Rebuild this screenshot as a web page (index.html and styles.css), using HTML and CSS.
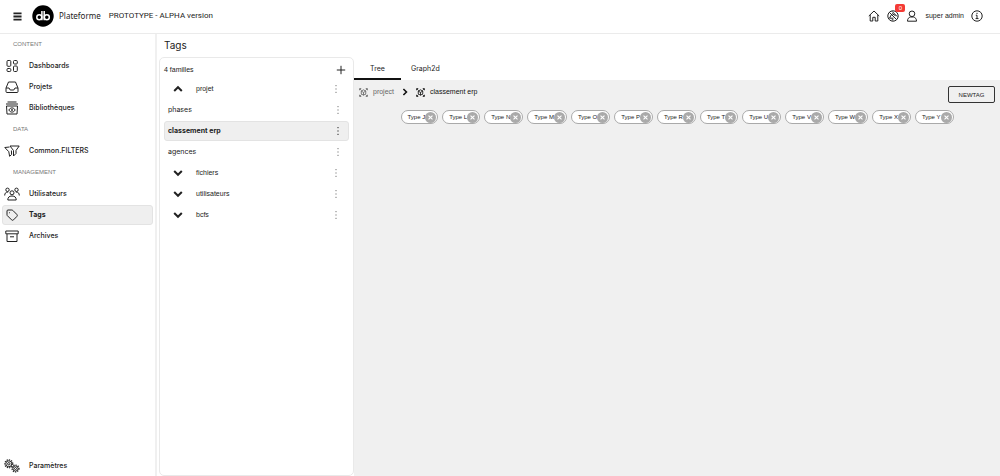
FILE: index.html
```html
<!DOCTYPE html>
<html lang="fr">
<head>
<meta charset="utf-8">
<title>Plateforme - Tags</title>
<link rel="stylesheet" href="styles.css">
</head>
<body>
<svg class="defs" aria-hidden="true">
  <symbol id="cube" viewBox="0 0 16 16"><path d="M1 4V1h3M12 1h3v3M15 12v3h-3M4 15H1v-3M8 3.200l4 2.300v5L8 12.800l-4-2.300v-5zM4 5.500l4 2.300 4-2.300M8 7.800v5M2 2l2.500 2.500M14 2l-2.500 2.500M2 14l2.500-2.500M14 14l-2.500-2.500"/></symbol>
  <symbol id="chevron" viewBox="0 0 10 10"><path d="M1.200 3l3.800 3.800L8.800 3"/></symbol>
  <symbol id="dots" viewBox="0 0 4 10"><path d="M2 1v1.200M2 4.400v1.200M2 7.800v1.200"/></symbol>
  <symbol id="cross" viewBox="0 0 10 10"><path d="M3.200 3.200l3.600 3.600M6.800 3.200l-3.600 3.600"/></symbol>
</svg>
<header class="topbar">
  <button class="icon-btn menu" aria-label="Menu"><svg viewBox="0 0 10 10"><path d="M.5 1.500h9M.5 5h9M.5 8.500h9"/></svg></button>
  <a class="brand" href="#"><svg class="logo" viewBox="0 0 22 22" role="img" aria-label="db"><circle cx="11" cy="11" r="10.700" fill="#000"/><g fill="none" stroke="#fff" stroke-width="1.500"><circle cx="7.300" cy="12.200" r="2.500"/><path d="M9.900 6v9.200M12.200 6v9.200"/><circle cx="14.800" cy="12.200" r="2.500"/></g></svg><span class="brand-name">Plateforme</span></a>
  <span class="version">PROTOTYPE - ALPHA version</span>
  <div class="tools">
    <button class="icon-btn" aria-label="Accueil"><svg viewBox="0 0 12 12"><path d="M.8 6L6 1l5.200 5M2.200 5v6h2.600V7.300h2.400V11h2.600V5"/></svg></button>
    <button class="icon-btn bell" aria-label="Notifications"><svg viewBox="0 0 12 12"><circle cx="6" cy="6" r="5.200"/><path d="M2.300 2.300l7.400 7.400M5.200 1.500l5 5M2.500 8.200L4.200 5M2.500 8.200h4M5 3.500l3.500 2.200M4.800 9.800h1.600"/></svg><span class="badge">0</span></button>
    <button class="icon-btn" aria-label="Compte"><svg viewBox="0 0 12 12"><circle cx="6" cy="3.800" r="2.800"/><path d="M1.500 11.200c0-2.600 1.200-3.700 3-4.200h3c1.800.5 3 1.600 3 4.200z"/></svg></button>
    <span class="user">super admin</span>
    <button class="icon-btn" aria-label="Informations"><svg viewBox="0 0 12 12"><circle cx="6" cy="6" r="5.200"/><path d="M4.800 5.200H6v3.300M4.600 8.600h2.900M6 2.800v1.200"/></svg></button>
  </div>
</header>
<div class="shell">
  <nav class="sidebar">
    <h2 class="nav-title">CONTENT</h2>
    <a class="nav-item" href="#"><svg viewBox="0 0 14 14"><rect x="2" y="1.500" width="3.800" height="5.800" rx="1"/><rect x="8.500" y="1.500" width="3.800" height="3.500" rx="1"/><rect x="2" y="9.500" width="3.800" height="3" rx="1"/><rect x="8.500" y="7" width="3.800" height="5.500" rx="1"/></svg>Dashboards</a>
    <a class="nav-item" href="#"><svg viewBox="0 0 14 14"><path d="M3.500 2h7L13 8v3.500a1 1 0 0 1-1 1H2a1 1 0 0 1-1-1V8zM1 8h3l1.200 2h3.600L10 8h3"/></svg>Projets</a>
    <a class="nav-item" href="#"><svg viewBox="0 0 14 14"><path d="M2.500 1h9M1 3h12M1.500 5h11l-.5 8H2zM3.800 9c1.600-2.800 4.800-2.800 6.400 0-1.600 2.800-4.800 2.800-6.400 0z"/><circle cx="7" cy="9" r=".6"/></svg>Bibliothèques</a>
    <h2 class="nav-title">DATA</h2>
    <a class="nav-item" href="#"><svg class="wide" viewBox="0 0 16 14"><path d="M6 2h9.200L12 6.500v3L9.500 12V6.500zM5.500 3L.8 3.500l4 4.200.8 4.600 2-1.800-.2-4"/></svg>Common.FILTERS</a>
    <h2 class="nav-title">MANAGEMENT</h2>
    <a class="nav-item" href="#"><svg class="wide" viewBox="0 0 16 14"><circle cx="3.500" cy="2.800" r="1.700"/><circle cx="12.500" cy="2.800" r="1.700"/><circle cx="8" cy="5.800" r="2"/><path d="M.7 8.500c0-2.400 1.200-3.500 3.500-3.500M15.300 8.500c0-2.400-1.200-3.500-3.500-3.500M3.800 13c0-2.600 1.300-4 4.200-4s4.200 1.400 4.200 4z"/></svg>Utilisateurs</a>
    <a class="nav-item selected" href="#"><svg viewBox="0 0 14 14"><path d="M3 2h3.800a1.500 1.500 0 0 1 1 .4l4 4a1.500 1.500 0 0 1 0 2.100L8.600 11.800a1.500 1.500 0 0 1-2.100 0l-4-4a1.500 1.500 0 0 1-.5-1V3a1 1 0 0 1 1-1z"/><path d="M4.500 4.400v.8"/></svg>Tags</a>
    <a class="nav-item" href="#"><svg viewBox="0 0 14 14"><path d="M.8 2h12.400v2.800H.8zM2 5v7.500h10V5M5 7.800h4"/></svg>Archives</a>
    <a class="nav-item settings" href="#"><svg class="wide" viewBox="0 0 16 14"><g stroke-width="1.200" stroke-dasharray="1.300 1"><circle cx="4.800" cy="4.800" r="4"/><circle cx="11.500" cy="9.500" r="3.500"/></g><circle cx="4.800" cy="4.800" r="3"/><circle cx="4.800" cy="4.800" r="1.200"/><circle cx="11.500" cy="9.500" r="2.600"/><circle cx="11.500" cy="9.500" r="1"/></svg>Paramètres</a>
  </nav>
  <div class="page">
    <h1 class="page-title">Tags</h1>
    <div class="content">
      <section class="families">
        <div class="families-head"><span>4 familles</span><button class="icon-btn" aria-label="Ajouter"><svg viewBox="0 0 10 10"><path d="M5 .8v8.400M.8 5h8.400"/></svg></button></div>
        <div class="family"><button class="toggle up" aria-label="Replier projet"><svg><use href="#chevron"/></svg></button><span>projet</span><button class="more" aria-label="Options projet"><svg><use href="#dots"/></svg></button></div>
        <ul class="children">
          <li class="child"><span>phases</span><button class="more" aria-label="Options phases"><svg><use href="#dots"/></svg></button></li>
          <li class="child selected"><span>classement erp</span><button class="more" aria-label="Options classement erp"><svg><use href="#dots"/></svg></button></li>
          <li class="child"><span>agences</span><button class="more" aria-label="Options agences"><svg><use href="#dots"/></svg></button></li>
        </ul>
        <div class="family"><button class="toggle" aria-label="Déplier fichiers"><svg><use href="#chevron"/></svg></button><span>fichiers</span><button class="more" aria-label="Options fichiers"><svg><use href="#dots"/></svg></button></div>
        <div class="family"><button class="toggle" aria-label="Déplier utilisateurs"><svg><use href="#chevron"/></svg></button><span>utilisateurs</span><button class="more" aria-label="Options utilisateurs"><svg><use href="#dots"/></svg></button></div>
        <div class="family"><button class="toggle" aria-label="Déplier bcfs"><svg><use href="#chevron"/></svg></button><span>bcfs</span><button class="more" aria-label="Options bcfs"><svg><use href="#dots"/></svg></button></div>
      </section>
      <main class="detail">
        <div class="tabs" role="tablist"><button class="tab active" role="tab" aria-selected="true">Tree</button><button class="tab" role="tab" aria-selected="false">Graph2d</button></div>
        <div class="canvas">
          <div class="crumb-row">
            <div class="crumbs"><a class="crumb" href="#"><svg><use href="#cube"/></svg>project</a><svg class="sep"><use href="#chevron"/></svg><a class="crumb current" href="#"><svg><use href="#cube"/></svg>classement erp</a></div>
            <button class="new-tag">NEWTAG</button>
          </div>
          <div class="chips">
            <span class="chip">Type J<button aria-label="Retirer Type J"><svg><use href="#cross"/></svg></button></span>
            <span class="chip">Type L<button aria-label="Retirer Type L"><svg><use href="#cross"/></svg></button></span>
            <span class="chip">Type N<button aria-label="Retirer Type N"><svg><use href="#cross"/></svg></button></span>
            <span class="chip">Type M<button aria-label="Retirer Type M"><svg><use href="#cross"/></svg></button></span>
            <span class="chip">Type O<button aria-label="Retirer Type O"><svg><use href="#cross"/></svg></button></span>
            <span class="chip">Type P<button aria-label="Retirer Type P"><svg><use href="#cross"/></svg></button></span>
            <span class="chip">Type R<button aria-label="Retirer Type R"><svg><use href="#cross"/></svg></button></span>
            <span class="chip">Type T<button aria-label="Retirer Type T"><svg><use href="#cross"/></svg></button></span>
            <span class="chip">Type U<button aria-label="Retirer Type U"><svg><use href="#cross"/></svg></button></span>
            <span class="chip">Type V<button aria-label="Retirer Type V"><svg><use href="#cross"/></svg></button></span>
            <span class="chip">Type W<button aria-label="Retirer Type W"><svg><use href="#cross"/></svg></button></span>
            <span class="chip">Type X<button aria-label="Retirer Type X"><svg><use href="#cross"/></svg></button></span>
            <span class="chip">Type Y<button aria-label="Retirer Type Y"><svg><use href="#cross"/></svg></button></span>
          </div>
        </div>
      </main>
    </div>
  </div>
</div>
</body>
</html>
```
FILE: styles.css
```css
* { box-sizing: border-box; }
body {
  margin: 0;
  min-height: 100vh;
  display: flex;
  flex-direction: column;
  background: #fff;
  color: #222;
  font: 7px/10px "Liberation Sans", sans-serif;
}
button { font: inherit; color: inherit; background: none; border: 0; padding: 0; cursor: pointer; }
a { color: inherit; text-decoration: none; }
h1, h2, ul { margin: 0; padding: 0; font-weight: 400; list-style: none; }
svg { display: block; flex: none; fill: none; stroke: currentColor; }
.defs { position: absolute; width: 0; height: 0; }

.topbar {
  display: flex;
  align-items: center;
  height: 34px;
  padding: 0 17px 1px 13px;
  border-bottom: 1px solid #ebebeb;
}
.icon-btn { position: relative; flex: none; }
.icon-btn svg { width: 12px; height: 12px; stroke-width: 1; }
.menu svg { width: 9px; height: 9px; stroke-width: 2; }
.brand { display: flex; align-items: center; gap: 5px; margin-left: 10px; }
.logo { width: 22px; height: 22px; stroke: none; }
.brand-name { font: 8px/12px "Noto Sans", sans-serif; }
.version { margin-left: 8px; font: 8px/12px Roboto, sans-serif; }
.tools { display: flex; align-items: center; gap: 7px; margin-left: auto; }
.user { line-height: 12px; }
.badge {
  position: absolute;
  top: -6px;
  left: 8px;
  width: 10px;
  border-radius: 2px;
  background: #f43b35;
  color: #fff;
  font-size: 6px;
  line-height: 8px;
  text-align: center;
}

.shell { flex: 1; display: flex; }
.sidebar {
  flex: none;
  display: flex;
  flex-direction: column;
  width: 157px;
  padding: 0 2px;
  border-right: 2px solid #f0f0f0;
}
.nav-title { height: 22px; padding-left: 11px; color: #777; font-size: 6px; line-height: 21px; }
.nav-item {
  display: flex;
  align-items: center;
  gap: 10px;
  height: 20px;
  margin-bottom: 1px;
  padding-left: 2px;
  border: 1px solid transparent;
  border-radius: 3px;
  font: 500 7px/10px Inter, sans-serif;
}
.nav-item svg { width: 14px; height: 14px; }
.nav-item .wide { width: 16px; margin: 0 -1px; }
.nav-item.selected { background: #efefef; border-color: #e3e3e3; font-weight: 700; }
.settings { margin-top: auto; margin-bottom: 0; }

.page { flex: 1; min-width: 0; display: flex; flex-direction: column; }
.page-title { padding-left: 7px; font: 10px/23px Inter, sans-serif; }
.content { flex: 1; display: flex; }
.families {
  flex: none;
  width: 195px;
  margin-left: 2px;
  padding: 4px;
  border: 1px solid #e9e9e9;
  border-radius: 5px;
}
.families-head { display: flex; align-items: center; justify-content: space-between; height: 16px; padding-right: 3px; }
.families-head svg { width: 10px; height: 10px; }
.family { display: flex; align-items: center; height: 21px; padding: 0 11px 0 9px; }
.toggle { width: 10px; margin-right: 13px; }
.toggle svg { width: 10px; height: 10px; stroke-width: 2; }
.up svg { transform: rotate(180deg); }
.more { margin-left: auto; color: #777; }
.more svg { width: 4px; height: 10px; stroke-width: 1; }
.children { display: flex; flex-direction: column; gap: 1px; padding-top: 1px; }
.child {
  display: flex;
  align-items: center;
  height: 20px;
  padding: 0 8px 0 3px;
  border: 1px solid transparent;
  border-radius: 3px;
  font: 7px/10px Inter, sans-serif;
}
.child.selected { background: #efefef; border-color: #e3e3e3; font-weight: 700; }
.selected .more { color: #222; }

.detail { flex: 1; min-width: 0; display: flex; flex-direction: column; }
.tabs { display: flex; height: 23px; }
.tab { min-width: 47px; padding: 2px 10px 0; border-bottom: 2px solid transparent; font-family: Inter, sans-serif; }
.tab.active { border-color: #111; }
.canvas { flex: 1; background: #f0f0f0; }
.crumb-row { display: flex; align-items: flex-start; justify-content: space-between; padding: 6px 5px 0; }
.crumbs { display: flex; align-items: center; gap: 7px; height: 12px; }
.crumb { display: flex; align-items: center; gap: 5px; color: #666; }
.crumb svg { width: 9px; height: 9px; stroke-width: 1.5; }
.current { color: #111; }
.sep { width: 8px; height: 8px; stroke: #111; stroke-width: 2; transform: rotate(-90deg); }
.new-tag { width: 47px; height: 17px; border: 1px solid #333; border-radius: 2px; font-size: 6px; }
.chips { display: flex; flex-wrap: wrap; justify-content: center; gap: 4px; padding-top: 7px; }
.chip {
  display: flex;
  align-items: center;
  height: 14px;
  padding: 0 1px 0 6px;
  border: 1px solid #aaa;
  border-radius: 7px;
  background: #fff;
  font-size: 6px;
}
.chip button { flex: none; width: 11px; height: 11px; border-radius: 50%; background: #aaa; color: #fff; }
.chip svg { width: 11px; height: 11px; }
```
